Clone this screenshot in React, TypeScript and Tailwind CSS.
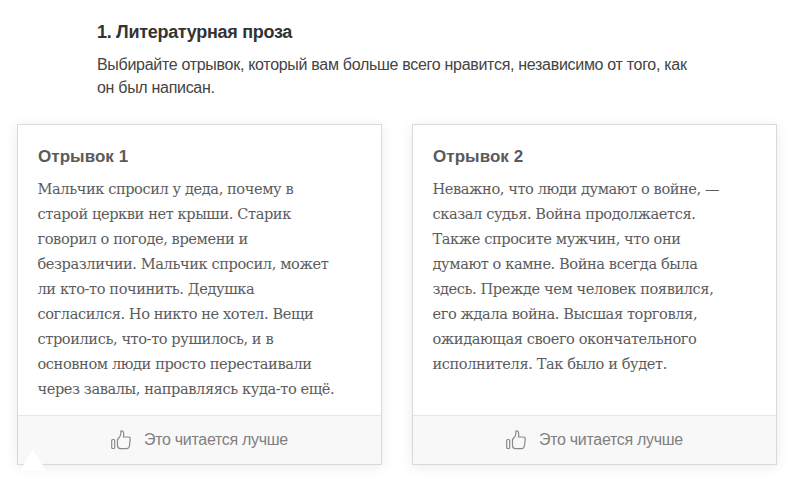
const passages = [
  {
    title: "Отрывок 1",
    lines: [
      "Мальчик спросил у деда, почему в",
      "старой церкви нет крыши. Старик",
      "говорил о погоде, времени и",
      "безразличии. Мальчик спросил, может",
      "ли кто-то починить. Дедушка",
      "согласился. Но никто не хотел. Вещи",
      "строились, что-то рушилось, и в",
      "основном люди просто перестаивали",
      "через завалы, направляясь куда-то ещё.",
    ],
  },
  {
    title: "Отрывок 2",
    lines: [
      "Неважно, что люди думают о войне, —",
      "сказал судья. Война продолжается.",
      "Также спросите мужчин, что они",
      "думают о камне. Война всегда была",
      "здесь. Прежде чем человек появился,",
      "его ждала война. Высшая торговля,",
      "ожидающая своего окончательного",
      "исполнителя. Так было и будет.",
    ],
  },
];

function ThumbIcon() {
  return (
    <svg width="20" height="20" viewBox="0 0 20 20" fill="none" stroke="#8a8a8a" strokeWidth="1.2" strokeLinejoin="round">
      <rect x="0.7" y="9.5" width="3" height="9" rx="1" />
      <path d="M6.5 9.5 L9 6.4 C10 5 10 3 9.8 1.6 C9.7 0.6 11.4 0.4 12.2 1.8 C13 3.2 12.8 5.4 12.4 7 L17.4 7 C18.8 7 19.4 8 19.2 9.4 L18.4 16 C18.2 17.6 17.2 18.6 15.6 18.6 L9.4 18.6 C7.6 18.6 6.5 17.4 6.5 15.6 Z" />
    </svg>
  );
}

function PassageCard({ title, lines }: { title: string; lines: string[] }) {
  return (
    <div className="flex h-[341px] w-[365px] flex-col border border-[#d9d9d9] bg-white shadow-[0_2px_12px_rgba(0,0,0,0.08)]">
      <div className="flex-1 px-5 pt-5">
        <h3 className="text-[17px] leading-6 font-bold tracking-[0.05px] text-[#5a5a5a]">{title}</h3>
        <p className="mt-[7px] -ml-[0.5px] font-['DejaVu_Serif',serif] text-[14.6px] leading-[25px] tracking-[-0.42px] whitespace-nowrap text-[#5c5c5c]">
          {lines.map((line) => (
            <span key={line} className="block">
              {line}
            </span>
          ))}
        </p>
      </div>
      <div className="flex h-[49px] items-center justify-center gap-[13px] border-t border-[#e6e6e6] bg-[#f8f8f8]">
        <ThumbIcon />
        <span className="text-[16px] tracking-[-0.3px] text-[#808080]">Это читается лучше</span>
      </div>
    </div>
  );
}

export default function App() {
  return (
    <div className="relative h-[496px] w-[799px] overflow-hidden bg-white font-['Liberation_Sans',sans-serif]">
      <div className="pl-[97px] pt-5">
        <h2 className="text-[18px] leading-6 font-bold tracking-[-0.3px] text-[#333]">1. Литературная проза</h2>
        <p className="mt-[9px] w-[600px] text-[16px] leading-[23px] tracking-[-0.3px] text-[#444]">
          Выбирайте отрывок, который вам больше всего нравится, независимо от того, как он был написан.
        </p>
      </div>
      <div className="mt-[25px] flex gap-[30px] pl-[17px]">
        {passages.map((p) => (
          <PassageCard key={p.title} title={p.title} lines={p.lines} />
        ))}
      </div>
      {/* white notch over the bottom-left card corner */}
      <div className="absolute left-[20px] top-[449px] h-[22px] w-[26px] bg-white [clip-path:polygon(50%_0,100%_100%,0_100%)]" />
    </div>
  );
}
